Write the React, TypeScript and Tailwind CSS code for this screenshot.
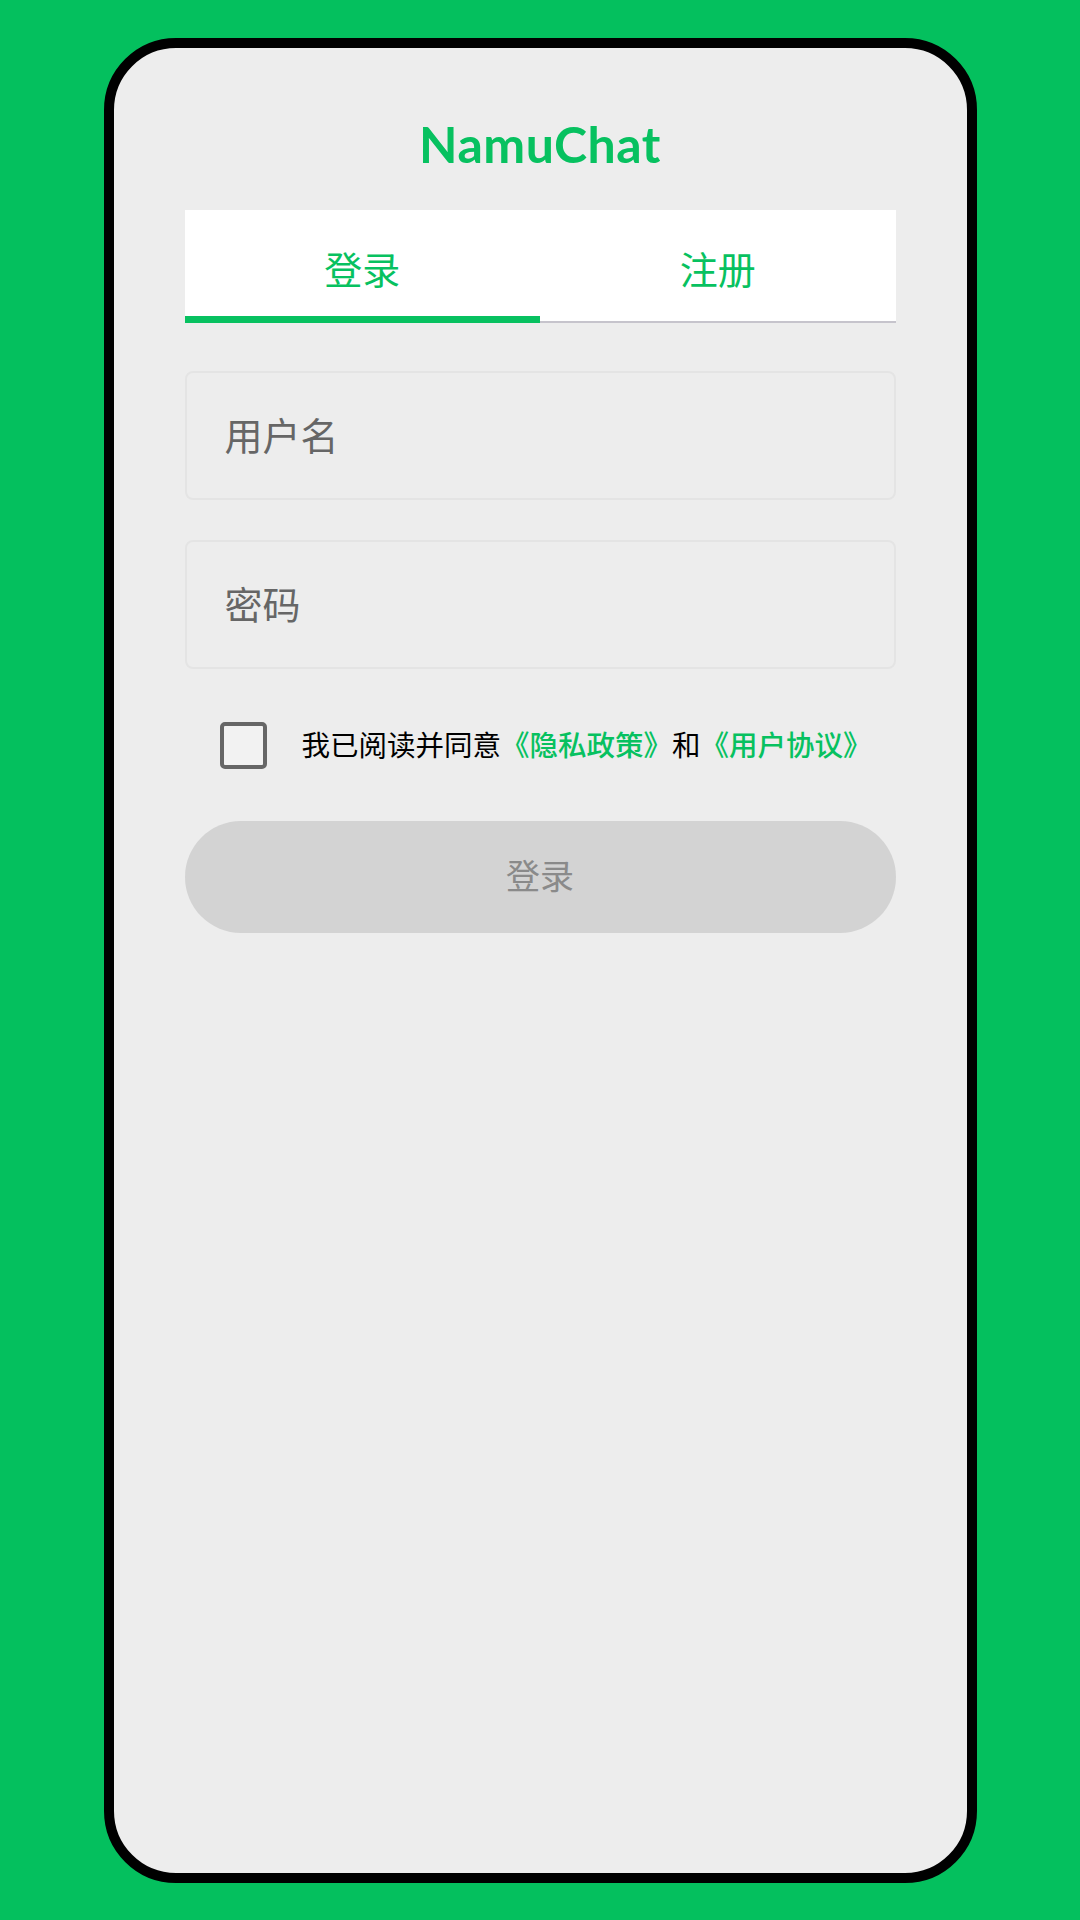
import { useState } from 'react'

type Tab = 'login' | 'register'

const cjk = "font-['Noto_Sans','Noto_Sans_CJK_SC',sans-serif]"

export default function App() {
  const [tab,      setTab]      = useState<Tab>('login')
  const [username, setUsername] = useState('')
  const [password, setPassword] = useState('')
  const [agreed,   setAgreed]   = useState(false)

  const ready = agreed && username.length > 0 && password.length > 0

  return (
    <div className="w-[1080px] h-[1920px] bg-[#04c05e] flex items-center justify-center">
      {/* Phone frame */}
      <div className={`w-[873px] h-[1845px] border-[10px] border-black rounded-[72px] bg-[#ededed] px-[71px] pt-[66px] flex flex-col ${cjk}`}>

        {/* Logo */}
        <h1 className="text-center text-[50px] leading-[60px] font-bold text-[#07c160] font-['Lato',sans-serif] tracking-[0.5px]">
          NamuChat
        </h1>

        {/* Tabs */}
        <div className="relative mt-[36px] h-[113px] bg-white border-b-2 border-[#c6c4cc] flex">
          {(['login', 'register'] as Tab[]).map(t => (
            <button
              key={t}
              onClick={() => setTab(t)}
              className="flex-1 flex items-center justify-center pt-[8px] text-[38px] text-[#07c160]"
            >
              {t === 'login' ? '登录' : '注册'}
            </button>
          ))}
          <div className={`absolute bottom-[-2px] h-[7px] w-1/2 bg-[#07c160] ${tab === 'login' ? 'left-0' : 'left-1/2'}`} />
        </div>

        {/* Fields */}
        <div className="mt-[48px] flex flex-col gap-[40px]">
          <input
            value={username}
            onChange={e => setUsername(e.target.value)}
            placeholder="用户名"
            className="h-[129px] w-full rounded-[8px] border-2 border-[#e4e4e4] bg-[#ededed] px-[38px] text-[38px] text-[#333] placeholder:text-[#666] outline-none"
          />
          <input
            type="password"
            value={password}
            onChange={e => setPassword(e.target.value)}
            placeholder="密码"
            className="h-[129px] w-full rounded-[8px] border-2 border-[#e4e4e4] bg-[#ededed] px-[38px] text-[38px] text-[#333] placeholder:text-[#666] outline-none"
          />
        </div>

        {/* Agreement */}
        <div className="mt-[53px] flex items-center pl-[35px]">
          <button
            onClick={() => setAgreed(!agreed)}
            className="w-[47px] h-[47px] rounded-[5px] border-[4px] border-[#666] bg-[#f2f2f2] shrink-0"
          />
          <p className="ml-[35px] text-[28.5px] leading-[40px] text-black whitespace-nowrap">
            我已阅读并同意<span className="text-[#07c160] font-medium">《隐私政策》</span>和<span className="text-[#07c160] font-medium">《用户协议》</span>
          </p>
        </div>

        {/* Submit */}
        <button
          disabled={!ready}
          className="mt-[52px] h-[112px] w-full rounded-full bg-[#d3d3d3] text-[34px] text-[#8a8a8a]"
        >
          登录
        </button>
      </div>
    </div>
  )
}
